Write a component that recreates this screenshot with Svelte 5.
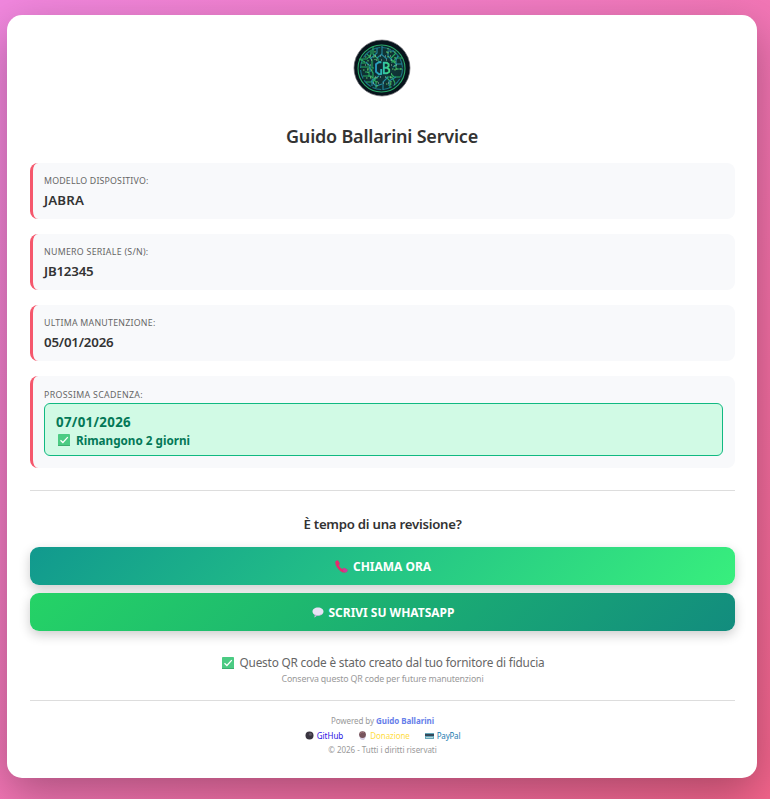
<script>
  const details = [
    { label: "Modello dispositivo:", value: "JABRA", labelWidth: 104.5, width: 40 },
    { label: "Numero seriale (S/N):", value: "JB12345", labelWidth: 104.5, width: 49.5 },
    { label: "Ultima manutenzione:", value: "05/01/2026", labelWidth: 111.5, width: 69.5 }
  ];

  const year = 2026;

  function fit(node, width) {
    const current = node.getBoundingClientRect().width;
    const spacing = (width - current) / node.textContent.length;
    node.style.letterSpacing = `${spacing}px`;
  }
</script>

{#snippet check()}
  <svg class="check" viewBox="0 0 12 12" aria-hidden="true">
    <rect width="12" height="12" rx="0.8" fill="#4bcb83" />
    <path d="M0 11h12v1H0z" fill="#3caf70" />
    <path d="M2.5 6.2 4.9 8.5 9.8 3.2" fill="none" stroke="#fff" stroke-width="1.25" />
  </svg>
{/snippet}

<div class="page">
  <main class="card">
    <header>
      <svg class="logo" viewBox="0 0 58 58" role="img" aria-label="GB">
        <defs>
          <linearGradient id="mono" x1="22" y1="0" x2="37" y2="0" gradientUnits="userSpaceOnUse">
            <stop offset="0" stop-color="#268fc0" />
            <stop offset="0.5" stop-color="#2fc0b0" />
            <stop offset="1" stop-color="#42d87b" />
          </linearGradient>
          <radialGradient id="disc">
            <stop offset="0" stop-color="#123c40" />
            <stop offset="0.75" stop-color="#0f3031" />
            <stop offset="0.86" stop-color="#07131b" />
            <stop offset="1" stop-color="#07131b" />
          </radialGradient>
        </defs>
        <circle cx="29" cy="29" r="28" fill="url(#disc)" stroke="#6d6a70" stroke-width="0.7" />
        <g fill="none" stroke-width="1.1">
          <circle cx="28.5" cy="29.5" r="23.5" stroke="#2aa869" />
          <circle cx="28.5" cy="29.5" r="21" stroke="#1b7387" stroke-dasharray="9 2" />
          <path stroke="#27ad62" d="M8 20h6l4-5v-4M10 37h8l5 6v6M49 19h-6l-3 4h-5M47 38h-6l-4-4M20 8v7l5 5v3M37 49v-7l-4-4M14 15l5 6v8h2M8 28h8l4 6v10M49 30h-6v-5l-5-5M43 14l-5 5v3M13 43h7l4-5M42 44l-3-6h-5M8 24h6M12 33h4v5M6 20l6 3" />
          <path stroke="#2489a0" d="M29 7v8l-5 4M30 51v-8l5-5M24 9v5l-7 6M41 12h-6v5l4 4M49 25h-5l-4 3M19 47v-6l7-4M13 23l4 4v6M36 47v-5l7-4M45 17l-2 4v4M29 45l-6 2-5-5M28 15l6 5" />
          <path stroke="#5fc669" stroke-dasharray="1.5 2.5" d="M12 18h11M33 13h10M10 31h10M39 30h10M13 39h12M33 45h9M22 12v9M15 21v13M42 18v14M38 34v12M24 38v11M35 9v11" />
          <path stroke="#a2b7aa" stroke-dasharray="1 4" d="M17 17h24M12 26h9M38 26h10M17 38h25M20 44h19M18 21h22" />
        </g>
        <path d="M21 22h17v14H21z" fill="#0d2b32" />
        <g fill="none" stroke="url(#mono)" stroke-width="1.9">
          <path d="M28.4 23.3 26 23.1l-3 2.2v7.5l3 2.4 2.2-.2v-5" />
          <path d="M30.8 22.8v12.4M30.8 23.7h3l1.8 1.5v2l-1.7 1.6h-3.1m3.1 0 2.3 1.6v2.3l-2.3 1.6h-3.1" />
        </g>
      </svg>
      <h1><span use:fit={192}>Guido Ballarini Service</span></h1>
    </header>

    <section class="details">
      {#each details as item}
        <div class="item">
          <div class="label"><span use:fit={item.labelWidth}>{item.label}</span></div>
          <div class="value"><span use:fit={item.width}>{item.value}</span></div>
        </div>
      {/each}
      <div class="item due">
        <div class="label"><span use:fit={99}>Prossima scadenza:</span></div>
        <div class="status">
          <div class="date"><span use:fit={75}>07/01/2026</span></div>
          <div class="remaining">
            {@render check()}
            <span use:fit={114}>Rimangono 2 giorni</span>
          </div>
        </div>
      </div>
    </section>

    <section class="contact">
      <h2><span use:fit={158}>È tempo di una revisione?</span></h2>
      <button class="call">
        <svg class="phone" viewBox="0 0 13 13" aria-hidden="true">
          <path d="M1 .8 3 .2l2 3.6-1.3 1.5q1.2 2.7 3.8 3.6L9 7.7l3.6 2.1-.5 1.8q-1.4 1.5-4.3.8Q4.4 11 2.2 7.8-.2 4.2.4 1.8z" fill="#e32d6d" />
          <path d="m8.8 7.8 3.7 2-.5 1.8-1.4.8-2.7-1.5z" fill="#c93c9d" />
        </svg>
        <span use:fit={78}>CHIAMA ORA</span>
      </button>
      <button class="whatsapp">
        <svg class="bubble" viewBox="0 0 12 11" aria-hidden="true">
          <path d="M6 .5c3.3 0 5.5 1.7 5.5 4s-2.2 4.2-5.5 4.2l-1-.1-2.4 1.8.3-2.5C1.4 7.1.5 6 .5 4.5.5 2.2 2.7.5 6 .5z" fill="#e9e2f5" />
          <path d="M1.1 6C2.5 8.4 8.7 9 11 6 9.8 8.2 7.8 8.8 5 8.6l-2.4 1.8.3-2.5z" fill="#bdacd4" />
        </svg>
        <span use:fit={126}>SCRIVI SU WHATSAPP</span>
      </button>
    </section>

    <div class="notes">
      <p class="trust">
        {@render check()}
        <span use:fit={305}>Questo QR code è stato creato dal tuo fornitore di fiducia</span>
      </p>
      <p class="keep"><span use:fit={202}>Conserva questo QR code per future manutenzioni</span></p>
    </div>

    <footer>
      <p class="powered">
        <span use:fit={43}>Powered by</span>
        <strong use:fit={58}>Guido Ballarini</strong>
      </p>
      <nav>
        <span class="github">
          <svg viewBox="0 0 9 9" aria-hidden="true">
            <circle cx="4.5" cy="4.5" r="4" fill="#39343f" />
            <circle cx="5.4" cy="3.2" r="1.5" fill="#5d5664" />
          </svg>
          <span use:fit={26.5}>GitHub</span>
        </span>
        <span class="donate">
          <svg viewBox="0 0 9 9" aria-hidden="true">
            <path d="m1 3 1.2 5L4 9h2l1.8-3L8 3z" fill="#d6cce2" />
            <circle cx="4.5" cy="3.6" r="3.4" fill="#77545c" />
            <path d="M2 2.5 4 1l2 .5" stroke="#9d7279" fill="none" />
          </svg>
          <span use:fit={39.5}>Donazione</span>
        </span>
        <span class="paypal">
          <svg viewBox="0 0 9 9" aria-hidden="true">
            <path d="M0 2h9v6H0z" fill="#65a7ba" />
            <path d="M0 3h9v2H0z" fill="#34495b" />
            <path d="M1 6h7v1H1z" fill="#b6d4d9" />
          </svg>
          <span use:fit={23.5}>PayPal</span>
        </span>
      </nav>
      <p><span use:fit={108.5}>© {year} - Tutti i diritti riservati</span></p>
    </footer>
  </main>
</div>

<style>
  :global(body) {
    margin: 0;
  }

  .page {
    box-sizing: border-box;
    height: 799px;
    padding: 15px 13px 21px 7px;
    overflow: hidden;
    background: linear-gradient(135deg, #f093fb -34%, #f5576c 138%);
    font-family: "Noto Sans", "Open Sans", sans-serif;
    color: #333;
  }

  .card {
    box-sizing: border-box;
    height: 763px;
    padding: 24px 22px 22px 23px;
    border-radius: 15px;
    background: #fff;
    box-shadow: 0 15px 45px rgba(0, 0, 0, 0.3);
  }

  span,
  strong {
    white-space: pre;
  }

  header {
    display: flex;
    flex-direction: column;
    align-items: center;
    height: 124px;
    padding-right: 1px;
  }

  .logo {
    width: 58px;
    height: 58px;
  }

  h1 {
    margin: 26px 0 0;
    font-size: 18px;
    line-height: 26px;
    font-weight: 600;
  }

  .details {
    display: flex;
    flex-direction: column;
    gap: 15px;
  }

  .item {
    box-sizing: border-box;
    height: 56px;
    padding: 11px 12px 0 11px;
    border-left: 3px solid #f5576c;
    border-radius: 8px;
    background: #f8f9fb;
  }

  .item.due {
    height: 92px;
    padding-top: 12px;
  }

  .label {
    font-size: 8.8px;
    line-height: 14px;
    text-transform: uppercase;
    color: #666;
  }

  .value {
    font-size: 13.3px;
    line-height: 18px;
    font-weight: 600;
    margin-top: 3px;
  }

  .status {
    box-sizing: border-box;
    height: 53px;
    margin-top: 1px;
    padding: 9px 11px;
    border: 1px solid #10b981;
    border-radius: 6px;
    background: #d1fae5;
    color: #047857;
    font-weight: 700;
  }

  .date {
    font-size: 13.3px;
    line-height: 18px;
  }

  .remaining {
    display: flex;
    align-items: center;
    gap: 6px;
    padding-left: 2px;
    font-size: 11.7px;
    line-height: 18px;
  }

  .check {
    width: 12px;
    height: 12px;
    flex: none;
  }

  .contact {
    display: flex;
    flex-direction: column;
    gap: 8px;
    margin-top: 22px;
    border-top: 1px solid #ddd;
  }

  h2 {
    margin: 23px 0 5px;
    font-size: 13.2px;
    line-height: 20px;
    font-weight: 600;
    text-align: center;
  }

  button {
    display: flex;
    align-items: center;
    justify-content: center;
    gap: 5px;
    height: 38px;
    padding: 0 0 0 1px;
    border: 0;
    border-radius: 9px;
    color: #fff;
    font: 700 12px "Noto Sans", "Open Sans", sans-serif;
    box-shadow: 0 4px 12px rgba(0, 0, 0, 0.2);
    cursor: pointer;
  }

  .call {
    background: linear-gradient(135deg, #11998e 0%, #38ef7d 100%);
  }

  .whatsapp {
    background: linear-gradient(135deg, #25d366 0%, #128c7e 100%);
  }

  .phone {
    width: 13px;
    height: 13px;
  }

  .bubble {
    width: 12px;
    height: 11px;
  }

  p {
    margin: 0;
  }

  .notes {
    margin-top: 22px;
    text-align: center;
  }

  .trust {
    display: flex;
    align-items: center;
    justify-content: center;
    gap: 6px;
    padding-left: 1px;
    font-size: 11.8px;
    line-height: 19px;
    color: #666;
  }

  .keep {
    font-size: 8.8px;
    line-height: 15px;
    color: #999;
  }

  footer {
    margin-top: 13px;
    padding-top: 13px;
    border-top: 1px solid #ddd;
    text-align: center;
    font-size: 8px;
    line-height: 14px;
    color: #999;
  }

  .powered {
    display: flex;
    justify-content: center;
    gap: 2px;
  }

  strong {
    color: #667eea;
  }

  nav {
    display: flex;
    justify-content: center;
    gap: 15px;
    height: 15px;
    line-height: 15px;
  }

  nav > span {
    display: flex;
    align-items: center;
    gap: 3px;
  }

  nav svg {
    width: 9px;
    height: 9px;
  }

  .github {
    color: #2914e4;
  }

  .donate {
    color: #ffdd44;
  }

  .paypal {
    color: #217bb0;
  }
</style>
